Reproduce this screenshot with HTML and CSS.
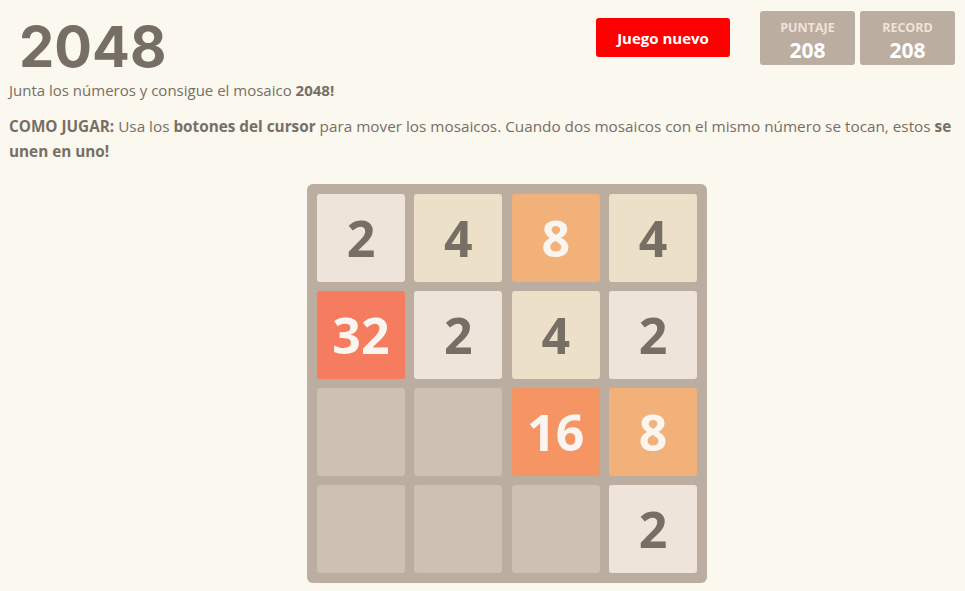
FILE: index.html
```html
<!DOCTYPE html>
<html lang="es">
<head>
<meta charset="utf-8">
<title>2048</title>
<link rel="stylesheet" href="styles.css">
</head>
<body>
<div class="page">
  <header class="top">
    <h1 class="title">2048</h1>
    <button class="new-game">Juego nuevo</button>
    <div class="scores">
      <div class="score"><span class="label">PUNTAJE</span><span class="value">208</span></div>
      <div class="score"><span class="label">RECORD</span><span class="value">208</span></div>
    </div>
  </header>
  <p class="intro">Junta los números y consigue el mosaico <strong>2048!</strong></p>
  <p class="how"><strong>COMO JUGAR:</strong> Usa los <strong>botones del cursor</strong> para mover los mosaicos. Cuando dos mosaicos con el mismo número se tocan, estos <strong>se unen en uno!</strong></p>
  <div class="board">
    <div class="tile t2">2</div>
    <div class="tile t4">4</div>
    <div class="tile t8">8</div>
    <div class="tile t4">4</div>
    <div class="tile t32">32</div>
    <div class="tile t2">2</div>
    <div class="tile t4">4</div>
    <div class="tile t2">2</div>
    <div class="tile empty"></div>
    <div class="tile empty"></div>
    <div class="tile t16">16</div>
    <div class="tile t8">8</div>
    <div class="tile empty"></div>
    <div class="tile empty"></div>
    <div class="tile empty"></div>
    <div class="tile t2">2</div>
  </div>
</div>
</body>
</html>
```
FILE: styles.css
```css
html, body {
  margin: 0;
  padding: 0;
  background: #fbf8ef;
}
body {
  font-family: "Open Sans", "DejaVu Sans", sans-serif;
  color: #776e65;
}
.page {
  padding: 0 10px 0 9px;
}
.top {
  display: flex;
  align-items: flex-start;
  height: 80px;
}
.title {
  margin: 17px 0 0 10px;
  font-family: Inter, "Open Sans", sans-serif;
  font-size: 56px;
  line-height: 60px;
  font-weight: 700;
  color: #776e65;
  flex: 1;
  letter-spacing: 0;
}
.new-game {
  margin-top: 18px;
  width: 134px;
  height: 39px;
  background: #ff0000;
  color: #fff;
  border: none;
  border-radius: 3px;
  font-family: "Open Sans", sans-serif;
  font-weight: 700;
  font-size: 15px;
  padding: 0;
}
.scores {
  display: flex;
  gap: 5px;
  margin-top: 11px;
  margin-left: 30px;
}
.score {
  width: 95px;
  height: 54px;
  background: #bbada0;
  border-radius: 3px;
  display: flex;
  flex-direction: column;
  align-items: center;
  color: #fff;
}
.score .label {
  font-size: 12.5px;
  font-weight: 700;
  color: #eee4da;
  margin-top: 9px;
  line-height: 16px;
}
.score .value {
  font-size: 21px;
  font-weight: 700;
  line-height: 24px;
  margin-top: 2px;
}
.intro {
  margin: 0;
  font-size: 15px;
  line-height: 20px;
}
.how {
  margin: 14px 0 0;
  font-size: 15.3px;
  line-height: 25px;
}
.board {
  margin: 20px 0 0 298px;
  width: 400px;
  height: 399px;
  box-sizing: border-box;
  padding: 10px;
  background: #bbada0;
  border-radius: 6px;
  display: grid;
  grid-template-columns: repeat(4, 1fr);
  grid-template-rows: repeat(4, 1fr);
  gap: 9px 9.5px;
}
.tile {
  border-radius: 3px;
  display: flex;
  align-items: center;
  justify-content: center;
  font-size: 50px;
  font-weight: 700;
  color: #776e65;
}
.empty { background: #cdc1b4; }
.t2 { background: #eee4da; }
.t4 { background: #ede0c8; }
.t8 { background: #f2b179; color: #f9f6f2; }
.t16 { background: #f59563; color: #f9f6f2; }
.t32 { background: #f67c5f; color: #f9f6f2; }
```
